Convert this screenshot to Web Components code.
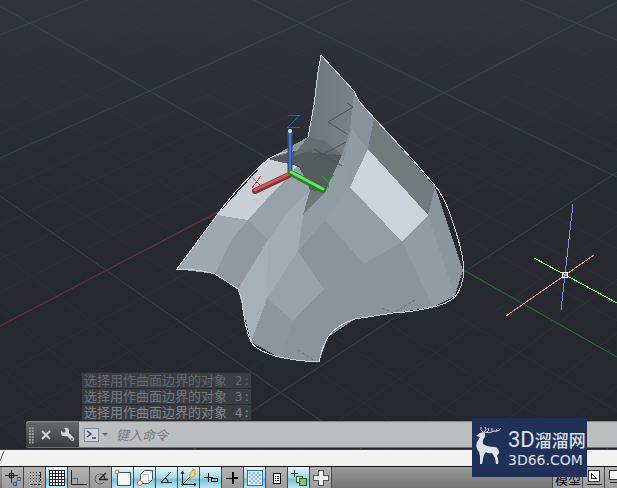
<!DOCTYPE html>
<html lang="zh-CN">
<head>
<meta charset="utf-8">
<title>CAD</title>
<style>
html,body{margin:0;height:100%}
body{font-family:"Liberation Sans","Noto Sans CJK SC",sans-serif;background:#25282d}
</style>
</head>
<body>
<cad-app></cad-app>
<script>
const define=(name,html,setup)=>customElements.define(name,class extends HTMLElement{
  constructor(){
    super();
    const t=document.createElement('template');
    t.innerHTML=html;
    this.attachShadow({mode:'open'}).append(t.content.cloneNode(true));
    if(setup)setup.call(this,this.shadowRoot);
  }
});

/* 3D scene: ground grid, surface, axes and cursor */
define('cad-scene',`<style>
:host{display:block;overflow:hidden}
svg{display:block;width:100%;height:100%}
</style>
<svg viewBox="0 0 617 449" preserveAspectRatio="xMidYMin slice" aria-hidden="true">
<defs>
<linearGradient id="bg" x2="0" y2="1"><stop offset="0" stop-color="#30343a"/><stop offset=".5" stop-color="#262a2f"/><stop offset="1" stop-color="#24272c"/></linearGradient>
<linearGradient id="back"><stop stop-color="#6f767b"/><stop offset="1" stop-color="#7a8288"/></linearGradient>
</defs>
<rect width="617" height="449" fill="url(#bg)"/>
<g id="minor" stroke="#353a41" stroke-opacity=".45"/>
<g id="major" stroke="#3c4350"/>
<path d="M0 326L217 213" stroke="#702b31"/>
<path d="M463 270L617 357" stroke="#2c6834"/>
<g shape-rendering="crispEdges">
<path fill="#8d969d" d="M321 55L354 91L361 104L388 133L435 187L463 270L455 296L433 307L393 313L355 319L328 337L319 362L281 358L251 342L238 289L215 274L177 269L217 215L268 159L308 137Z"/>
<path fill="url(#back)" d="M321 55L354 91L353 103L350 130L342 155L325 141L308 137Z"/>
<path fill="#7e878d" d="M354 91L361 104L353 135L342 155L350 130Z"/>
<path fill="#89929a" d="M354 94L374 118L368 149L350 187L342 155L350 130Z"/>
<path fill="#929ba2" d="M352 129L368 149L350 187L342 165Z"/>
<path fill="#727a7b" d="M374 118L435 187L428 215L368 149Z"/>
<path fill="#646a6d" d="M308 137L325 141L342 155L335 163L290 160Z"/>
<path fill="#565b5e" d="M268 159L294 151L342 155L325 192L303 215L310 190L297 168Z"/>
<path fill="#676d70" d="M308 137L325 141L342 155L316 148L292 157Z"/>
<path fill="#6f7778" d="M325 192L303 215L310 190Z"/>
<path fill="#ccd4db" d="M368 149L428 215L402 242L350 187Z"/>
<path fill="#c8d0d6" d="M268 159L297 166L291 174L275 190L248 220L217 215Z"/>
<path fill="#9fa8af" d="M217 215L248 220L232 239L215 274L177 269Z"/>
<path fill="#8f999f" d="M248 220L275 190L291 174L299 167L305 178L310 190L285 216L268 240L238 289L215 274L232 239Z"/>
<path fill="#98a2a9" d="M248 220L275 190L291 174L297 166L310 190L285 216L268 240Z"/>
<path fill="#a1adb3" d="M310 190L303 215L298 251L267 298L251 342L238 289L268 240L285 216Z"/>
<path fill="#a8b4b9" d="M268 240L267 298L251 342L238 289Z" opacity=".55"/>
<path fill="#929ca3" d="M303 215L325 192L342 155L350 187L325 220L298 251Z"/>
<path fill="#98a2a8" d="M298 251L324 289L293 321L267 298Z"/>
<path fill="#8c969d" d="M267 298L293 321L280 358L251 342Z"/>
<path fill="#8a939a" d="M293 321L324 289L355 319L328 337L319 362L280 358Z"/>
<path fill="#8c949b" d="M298 251L325 220L364 264L402 242L433 307L355 319L324 289Z"/>
<path fill="#949ea4" d="M325 220L350 187L402 242L364 264Z"/>
<path fill="#929ca3" d="M402 242L428 215L455 296L433 307Z"/>
<path fill="#8b959c" d="M428 215L435 187L463 270L455 296Z"/>
</g>
<g fill="none" stroke="#4b5256">
<path d="M347 103L353 107L328 122L347 134M346 142L314 159M314 149L342 166"/>
<path stroke-dasharray="3 2" stroke="#646c72" d="M298 350L318 363M382 308L393 313L415 300"/>
</g>
<path fill="none" stroke="#ccd3d8" shape-rendering="crispEdges" d="M308 137L314 105L318 72L321 55L354 91Q358 101 364 107L388 133L413 160L432 182Q445 196 453 223Q463 252 464 270Q463 287 455 297Q447 304 433 307Q413 312 393 313L355 319Q336 325 328 337Q322 347 319 362Q295 361 275 356Q256 350 251 342Q244 326 242 300L238 289L215 274Q199 269 177 269L217 215Q237 187 268 159Q280 152 293 151"/>
<g stroke-linecap="round">
<path d="M289 175L255 191" stroke="#813238" stroke-width="6"/><path d="M289 174L255 190" stroke="#d45758" stroke-width="3"/>
<path d="M290 132V172" stroke="#2b508d" stroke-width="5" stroke-linecap="butt"/><path d="M290 132V171" stroke="#4877bd" stroke-width="2"/><circle cx="290" cy="131" r="2" fill="#dbeaff"/>
<path d="M291 173L323 190" stroke="#277d2b" stroke-width="6"/><path d="M291 172L323 189" stroke="#6be165" stroke-width="3"/>
</g>
<g fill="none" shape-rendering="crispEdges">
<path stroke="#1e60c6" d="M288 115H300L288 127H300"/>
<path stroke="#e8384b" d="M251 176L263 188M261 176L252 188"/>
<path stroke="#28a038" d="M322 176L328 182L334 175M328 182V188"/>
<path stroke="#f08a8e" d="M506 316L594 255"/>
<path stroke="#86ff86" d="M534 258L617 303"/>
<path stroke="#8585f5" d="M573 204L561 310"/>
<path stroke="#fff" d="M562 272H567V277H562Z"/>
</g>
</svg>`,root=>{
  const a=[[480,1090],[196,628],[6,357],[-123,177],[-215,40],[-280,-60]];
  const b=[[-80,-370],[35,-210],[158,-119],[326,2],[576,172],[990,440]];
  const add=(id,y1,y2)=>{
    const l=document.createElementNS('http://www.w3.org/2000/svg','line');
    l.setAttribute('x1',0);l.setAttribute('y1',y1);l.setAttribute('x2',617);l.setAttribute('y2',y2);
    root.getElementById(id).append(l);
  };
  for(const f of [a,b])f.forEach((p,i)=>{
    add('major',p[0],p[1]);
    const q=f[i+1];
    if(q)for(let k=1;k<5;k++)add('minor',p[0]+(q[0]-p[0])*k/5,p[1]+(q[1]-p[1])*k/5);
  });
});

define('log-line',`<style>
:host{display:block;box-sizing:border-box;width:max-content;height:16px;line-height:16px;padding:0 1px 0 2px;border-top:1px solid #292c31;background:#3a3d41;color:var(--log-color,#777b7f);font-size:13px;font-family:"DejaVu Sans Mono","Noto Sans CJK SC",monospace;white-space:pre;overflow:hidden}
</style><slot></slot>`);

define('command-bar',`<style>
:host{display:flex;height:27px;box-sizing:border-box;border-top:1px solid #85878a;border-bottom:1px solid #707275;border-radius:3px 0 0 3px;overflow:hidden;background:#bcbdbf}
.tools{display:flex;align-items:center;width:53px;background:linear-gradient(#68696b,#393b3e);flex:none}
button{border:0;background:none;padding:0;margin:0;display:flex;align-items:center;justify-content:center}
.x{width:22px;height:24px}.w{width:24px;height:24px}
.grip{margin-left:3px}
form{display:flex;flex:1;align-items:center;min-width:0;margin:0;padding-left:5px}
.p{width:26px;height:20px}
input{flex:1;min-width:0;border:0;outline:0;background:none;padding:0 0 0 6px;height:24px;font:13px "Noto Sans CJK SC",sans-serif;color:#444}
input::placeholder{color:#77797c;opacity:1;font-style:italic}
</style>
<div class="tools">
<svg class="grip" width="7" height="18" viewBox="0 0 7 18" fill="#a1a2a3"><path d="M0 1h2v2H0zM3 1h2v2H3zM0 4h2v2H0zM3 4h2v2H3zM0 7h2v2H0zM3 7h2v2H3zM0 10h2v2H0zM3 10h2v2H3zM0 13h2v2H0zM3 13h2v2H3zM0 16h2v2H0zM3 16h2v2H3z"/></svg>
<button class="x" aria-label="关闭"><svg width="10" height="10" viewBox="0 0 10 10"><path d="M1 1L9 9M9 1L1 9" stroke="#d5d6d6" stroke-width="2"/></svg></button>
<button class="w" aria-label="自定义"><svg width="15" height="15" viewBox="0 0 15 15"><path d="M1 4L4 6L6 4L4 1Q8 0 9 3V6L14 11Q15 14 12 14L7 9Q2 10 1 7Z" fill="#d5d6d6"/><circle cx="12" cy="12" r="1" fill="#55575a"/></svg></button>
</div>
<form onsubmit="return false">
<button type="button" class="p" aria-label="最近使用的命令"><svg width="26" height="16" viewBox="0 0 26 16"><rect x=".5" y="1.5" width="14" height="13" fill="#d0d3d9" stroke="#7c8392"/><path d="M3 4L7 7L3 10M8 11H12" fill="none" stroke="#3a4254" stroke-width="1.4"/><path d="M18 6H24L21 9Z" fill="#66686b"/></svg></button>
<input aria-label="命令" placeholder="键入命令">
</form>`);

define('scroll-strip',`<style>
:host{display:block;height:16px;background:#f2f2f2;border-top:1px solid #3c3e42;border-bottom:1px solid #111}
svg{display:block}
</style><svg width="6" height="16" viewBox="0 0 6 16"><path d="M0 11L4 1" stroke="#555" fill="none"/></svg>`);

define('status-button',`<style>
:host{display:block;flex:none;width:22px;height:21px}
:host([wide]){width:30px}
button{display:flex;align-items:flex-start;justify-content:flex-start;box-sizing:border-box;width:100%;height:100%;margin:0;padding:2px 0 0 2px;border:0;border-right:1px solid #48494a;background:linear-gradient(#b3b3b3,#9c9c9c);color:#000;font:13px/20px "Noto Sans CJK SC",sans-serif;white-space:nowrap;overflow:hidden}
:host([on]) button{background:linear-gradient(#e4f5fa,#a7d9e8 50%,#7cc1d6 60%,#b8e6ef)}
::slotted(svg){display:block;flex:none;width:18px;height:18px;shape-rendering:crispEdges}
</style><button><slot></slot></button>`,function(root){
  const b=root.querySelector('button');
  queueMicrotask(()=>{if(this.hasAttribute('name'))b.setAttribute('aria-label',this.getAttribute('name'));b.setAttribute('aria-pressed',this.hasAttribute('on'))});
});

define('status-bar',`<style>
:host{display:flex;height:21px;padding-left:2px;background:linear-gradient(#9a9a9a,#747474);overflow:hidden}
.gap{flex:1}
.end{display:flex;border-left:1px solid #48494a;margin-right:-10px}
svg{fill:none;stroke:#222}
.soft{shape-rendering:geometricPrecision}
</style>
<status-button name="推断约束"><svg viewBox="0 0 18 18"><path d="M7.500 1V14M1 6.500H14"/><path d="M5.500 4.500H9.500V8.500H5.500Z"/><path d="M13.500 8.500H16.500V11.500H13.500ZM9.500 13.500H12.500V16.500H9.500ZM12 13L14 11" stroke="#38618b"/></svg></status-button>
<status-button name="捕捉"><svg viewBox="0 0 18 18"><path d="M4 3.500H14M4 6.500H14M4 9.500H14M4 12.500H14" stroke-dasharray="1 2"/><path d="M14.500 3V12" stroke-dasharray="6 1"/><path d="M4 15.500H15" stroke-dasharray="3 1"/></svg></status-button>
<status-button on name="栅格"><svg viewBox="0 0 18 18"><path fill="#fff" d="M1.500 1.500H16.500V16.500H1.500ZM4.500 1V17M7.500 1V17M10.500 1V17M13.500 1V17M1 4.500H17M1 7.500H17M1 10.500H17M1 13.500H17"/></svg></status-button>
<status-button name="正交"><svg viewBox="0 0 18 18"><path d="M1.500 1V15.500H17"/><path d="M2 9.500H7.500V15" stroke="#4c7381"/></svg></status-button>
<status-button name="极轴"><svg class="soft" viewBox="0 0 18 18"><path d="M11 6A5 5 0 1 0 12 13" stroke="#555"/><path d="M7 10.500L14 4M7 10.500H16M11 6Q13 8 13 11" stroke-width="1.300"/></svg></status-button>
<status-button on name="对象捕捉"><svg viewBox="0 0 18 18"><path fill="#f4f5f7" stroke="#4a5157" d="M3.500 3.500H16.500V16.500H3.500Z"/><circle class="soft" cx="3" cy="3" r="2" stroke="#d8673a" fill="#fff"/></svg></status-button>
<status-button on name="三维对象捕捉"><svg class="soft" viewBox="0 0 18 18"><path fill="#f4f5f7" stroke="#4a5157" d="M4.500 5.500L8.500 1.500H16.500V10.500L12.500 14.500H4.500Z"/><path d="M5 5.500H12.500V14M12.500 5.500L16 2" stroke="#c5cbd1"/><circle cx="4" cy="14" r="2.500" stroke="#d8673a" fill="#fff"/></svg></status-button>
<status-button on name="对象追踪"><svg class="soft" viewBox="0 0 18 18"><path d="M13 3L3 13.500H14"/><path d="M7 9Q10 10 10 13"/></svg></status-button>
<status-button on name="动态UCS"><svg class="soft" viewBox="0 0 18 18"><path d="M2.500 17V3M1 5L2.500 2L4 5M1 15.500H16M14 14L16 15.500L14 17M3 15L10 8"/><path d="M13 1H16L14 5H16L9 11L11 7H9Z" fill="#ffe071" stroke="#d9952c"/></svg></status-button>
<status-button on name="动态输入"><svg viewBox="0 0 18 18"><path d="M2 8.500H11M6.500 4V13M9.500 9.500H15.500V12.500H9.500Z" stroke="#000"/></svg></status-button>
<status-button name="线宽"><svg viewBox="0 0 18 18"><path d="M2 9.500H8" stroke="#000"/><path d="M8 9H14M9 3V15" stroke="#000" stroke-width="2"/></svg></status-button>
<status-button on name="透明度"><svg viewBox="0 0 18 18"><rect x="1.500" y="1.500" width="15" height="15" fill="#d9effd" stroke="#3667aa"/><path d="M3 4H15M3 8H15M3 12H15" stroke="#8fc0ea" stroke-width="2" stroke-dasharray="2 2"/><path d="M5 6H15M5 10H15M5 14H15" stroke="#8fc0ea" stroke-width="2" stroke-dasharray="2 2"/></svg></status-button>
<status-button name="快捷特性"><svg viewBox="0 0 18 18"><path fill="#fff" stroke="#000" d="M5.500 4.500H12.500V14.500H5.500Z"/><path stroke="#000" d="M7 7.500H8M9 7.500H11M7 9.500H8M9 9.500H11M7 11.500H8M9 11.500H11"/></svg></status-button>
<status-button on name="选择循环"><svg viewBox="0 0 18 18"><path d="M1 4.500H8M4.500 1V8" stroke="#173d64"/><path fill="#d9ead6" stroke="#235b28" d="M6.500 7.500H12.500V13.500H6.500Z"/><path fill="#8cc082" stroke="#235b28" d="M9.500 9.500H16.500V16.500H9.500Z"/></svg></status-button>
<status-button name="注释监视器"><svg viewBox="0 0 18 18"><path fill="#f0f2f3" stroke="#4e5559" d="M6.500 1.500H11.500V6.500H16.500V11.500H11.500V16.500H6.500V11.500H1.500V6.500H6.500Z"/></svg></status-button>
<span class="gap"></span>
<div class="end">
<status-button wide>模型</status-button>
<status-button name="布局"><svg viewBox="0 0 18 18"><path fill="#fafafa" stroke="#333" d="M3.500 1.500H14.500V12.500H3.500Z"/><path d="M6.500 4V9.500H11.500L6.500 4.500M2 15.500H17"/></svg></status-button>
<status-button name="快速查看"><svg viewBox="0 0 18 18"><path fill="#fafafa" stroke="#333" d="M2.500 1.500H15.500V10.500H2.500Z"/><path d="M3 13.500H15"/></svg></status-button>
</div>`);

define('site-mark',`<style>
:host{display:flex;box-sizing:border-box;width:115px;height:59px;background:#203057;color:#dde1e8;padding:9px 0 0 3px;gap:5px}
svg{flex:none}
.a{display:flex;align-items:center;height:25px;font:17px/25px "Noto Sans CJK SC",sans-serif;font-weight:500;white-space:nowrap}
.a span{font:22px/25px Roboto,sans-serif}
.b{font:14px/16px "DejaVu Sans",sans-serif;white-space:nowrap}
</style>
<svg width="28" height="38" viewBox="0 0 28 38"><path d="M1 9L5 6L9 5Q11 7 10 10Q7 13 8 17Q12 20 20 20Q24 21 24 26L22 29Q24 32 23 37H21L20 31L17 26Q13 27 11 25Q8 28 8 32L7 37H5V29L4 25Q0 20 2 15L5 10Z" fill="#dde1e8"/><path d="M8 5Q5 3 6 0M9 5Q12 3 10 0M9 5Q15 7 19 4Q24 5 26 1M12 5Q15 3 13 1M18 5Q16 3 17 1M22 4Q22 2 21 2" fill="none" stroke="#dde1e8"/></svg>
<div><div class="a"><span>3D</span>溜溜网</div><div class="b">3D66.COM</div></div>`);

define('cad-app',`<style>
:host{display:flex;flex-direction:column;min-height:100vh;position:relative;overflow:hidden}
.view{flex:1;min-height:300px;position:relative;display:flex;flex-direction:column;justify-content:flex-end;background:#25282d}
cad-scene{position:absolute;inset:0}
.console{position:relative;display:flex;flex-direction:column;gap:1px;padding:0 0 1px 26px}
.log{display:flex;flex-direction:column;align-items:flex-start;margin-left:56px}
site-mark{position:absolute;right:30px;bottom:11px}
</style>
<div class="view">
<cad-scene></cad-scene>
<div class="console">
<div class="log">
<log-line style="--log-color:#65696d">选择用作曲面边界的对象 2:</log-line>
<log-line style="--log-color:#74787c">选择用作曲面边界的对象 3:</log-line>
<log-line style="--log-color:#83878b">选择用作曲面边界的对象 4:</log-line>
</div>
<command-bar></command-bar>
</div>
</div>
<scroll-strip></scroll-strip>
<status-bar></status-bar>
<site-mark></site-mark>`);
</script>
</body>
</html>
